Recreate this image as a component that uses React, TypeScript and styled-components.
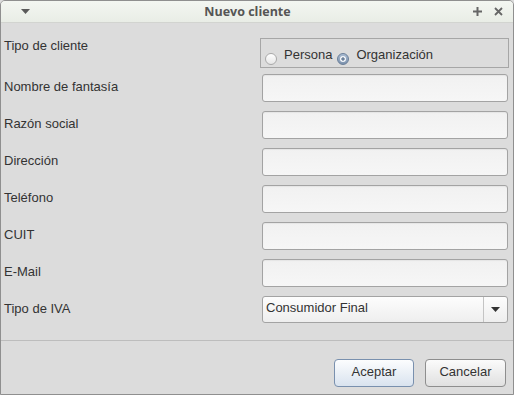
import React from 'react';
import styled, { createGlobalStyle } from 'styled-components';

const GlobalStyle = createGlobalStyle`
  html, body {
    margin: 0;
    padding: 0;
    background: #dcdcdc;
  }
  * {
    box-sizing: border-box;
  }
`;

const Window = styled.div`
  display: flex;
  flex-direction: column;
  width: 514px;
  height: 395px;
  background: #dcdcdc;
  border: 1px solid #8f8f8f;
  border-radius: 5px 5px 0 0;
  overflow: hidden;
  font-family: 'Liberation Sans', Arial, sans-serif;
  font-size: 13px;
  color: #333;
`;

const TitleBar = styled.div`
  display: flex;
  align-items: center;
  height: 22px;
  padding: 0 8px 0 10px;
  background: linear-gradient(#f3f6f1, #e9ede6);
  border-bottom: 1px solid #d2d4d0;
`;

const TitleText = styled.div`
  flex: 1;
  text-align: center;
  font-family: 'Open Sans', 'DejaVu Sans', sans-serif;
  font-weight: 700;
  font-size: 12.5px;
  color: #555;
`;

const TitleButton = styled.span`
  display: flex;
  align-items: center;
  justify-content: center;
  width: 14px;
  height: 14px;
  margin-left: 7px;
`;

const Body = styled.div`
  flex: 1;
  display: flex;
  flex-direction: column;
  padding-top: 14px;
`;

const Form = styled.div`
  display: grid;
  grid-template-columns: 256px 250px;
  grid-auto-rows: 28px;
  row-gap: 9px;
  padding-left: 3px;
`;

const Label = styled.div<{ top?: boolean }>`
  display: flex;
  align-items: ${({ top }) => (top ? 'flex-start' : 'center')};
  padding-top: ${({ top }) => (top ? '1px' : '0')};
  margin-top: ${({ top }) => (top ? '0' : '-3px')};
  line-height: 15px;
`;

const RadioGroup = styled.div`
  display: flex;
  align-items: flex-end;
  height: 30px;
  margin-top: 1px;
  padding: 0 0 5px 4px;
  border: 1px solid #a6a6a6;
  width: 249px;
`;

const RadioOption = styled.label`
  display: flex;
  align-items: flex-end;
  gap: 7px;
  margin-right: 5px;
  line-height: 14px;
`;

const RadioDot = styled.span<{ checked?: boolean }>`
  position: relative;
  display: inline-block;
  width: 12px;
  height: 12px;
  margin-bottom: -3px;
  border-radius: 50%;
  border: 1px solid ${({ checked }) => (checked ? '#6a7f99' : '#a9a9a9')};
  background: ${({ checked }) =>
    checked ? 'linear-gradient(#a9bbd1, #7d93ae)' : 'linear-gradient(#ffffff, #e6e6e6)'};

  &::after {
    content: '';
    display: ${({ checked }) => (checked ? 'block' : 'none')};
    position: absolute;
    left: 2px;
    top: 2px;
    width: 6px;
    height: 6px;
    border-radius: 50%;
    background: radial-gradient(circle, #6c819b 0 1.4px, #f5f7fa 1.9px);
  }
`;

const TextField = styled.div`
  margin: 0 2px;
  height: 28px;
  border: 1px solid #a3a3a3;
  border-radius: 3px;
  background: linear-gradient(#f1f1f1, #f6f6f6);
  box-shadow: inset 0 1px 1px rgba(0, 0, 0, 0.05);
`;

const Combo = styled.div`
  display: flex;
  margin: 0 2px;
  height: 27px;
  border: 1px solid #a3a3a3;
  border-radius: 3px;
  background: linear-gradient(#fdfdfd, #eeeeee);
`;

const ComboValue = styled.div`
  flex: 1;
  padding: 3px 0 0 3px;
`;

const ComboArrow = styled.div`
  display: flex;
  align-items: center;
  justify-content: center;
  width: 24px;
  border-left: 1px solid #c4c4c4;
`;

const Separator = styled.div`
  height: 1px;
  margin-top: 16px;
  background: #bdbdbd;
`;

const ButtonBar = styled.div`
  display: flex;
  justify-content: flex-end;
  gap: 11px;
  padding: 18px 7px 0 0;
`;

const Button = styled.button<{ primary?: boolean; w: number }>`
  width: ${({ w }) => w}px;
  height: 28px;
  padding: 0 0 3px;
  font-family: 'Liberation Sans', Arial, sans-serif;
  font-size: 13px;
  color: #333;
  border-radius: 4px;
  border: 1px solid ${({ primary }) => (primary ? '#7990ae' : '#8e8e8e')};
  background: ${({ primary }) =>
    primary ? 'linear-gradient(#fcfdfe, #d9e3ef)' : 'linear-gradient(#fbfbfb, #e0e0e0)'};
`;

const Caret = ({ color = '#555' }: { color?: string }) => (
  <svg width="9" height="5" viewBox="0 0 9 5">
    <path d="M0 0 H9 L4.5 5 Z" fill={color} />
  </svg>
);

const fields = ['Nombre de fantasía', 'Razón social', 'Dirección', 'Teléfono', 'CUIT', 'E-Mail'];

const App = () => {
  return (
    <>
      <GlobalStyle />
      <Window>
        <TitleBar>
          <TitleButton>
            <Caret color="#5a5a5a" />
          </TitleButton>
          <TitleText>Nuevo cliente</TitleText>
          <TitleButton>
            <svg width="9" height="9" viewBox="0 0 9 9">
              <path d="M4.5 0 V9 M0 4.5 H9" stroke="#666" strokeWidth="2" />
            </svg>
          </TitleButton>
          <TitleButton>
            <svg width="9" height="9" viewBox="0 0 9 9">
              <path d="M1 1 L8 8 M8 1 L1 8" stroke="#666" strokeWidth="1.8" />
            </svg>
          </TitleButton>
        </TitleBar>

        <Body>
          <Form>
            <Label top>Tipo de cliente</Label>
            <RadioGroup>
              <RadioOption>
                <RadioDot />
                Persona
              </RadioOption>
              <RadioOption>
                <RadioDot checked />
                Organización
              </RadioOption>
            </RadioGroup>

            {fields.map((field) => (
              <React.Fragment key={field}>
                <Label>{field}</Label>
                <TextField />
              </React.Fragment>
            ))}

            <Label>Tipo de IVA</Label>
            <Combo>
              <ComboValue>Consumidor Final</ComboValue>
              <ComboArrow>
                <Caret color="#333" />
              </ComboArrow>
            </Combo>
          </Form>

          <Separator />

          <ButtonBar>
            <Button primary w={80}>
              Aceptar
            </Button>
            <Button w={81}>Cancelar</Button>
          </ButtonBar>
        </Body>
      </Window>
    </>
  );
};

export default App;
